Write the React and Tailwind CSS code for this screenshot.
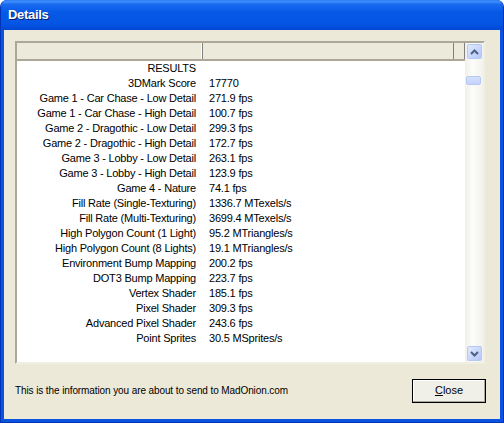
import React from "react";

const ROWS = [
  ["RESULTS", ""],
  ["3DMark Score", "17770"],
  ["Game 1 - Car Chase - Low Detail", "271.9 fps"],
  ["Game 1 - Car Chase - High Detail", "100.7 fps"],
  ["Game 2 - Dragothic - Low Detail", "299.3 fps"],
  ["Game 2 - Dragothic - High Detail", "172.7 fps"],
  ["Game 3 - Lobby - Low Detail", "263.1 fps"],
  ["Game 3 - Lobby - High Detail", "123.9 fps"],
  ["Game 4 - Nature", "74.1 fps"],
  ["Fill Rate (Single-Texturing)", "1336.7 MTexels/s"],
  ["Fill Rate (Multi-Texturing)", "3699.4 MTexels/s"],
  ["High Polygon Count (1 Light)", "95.2 MTriangles/s"],
  ["High Polygon Count (8 Lights)", "19.1 MTriangles/s"],
  ["Environment Bump Mapping", "200.2 fps"],
  ["DOT3 Bump Mapping", "223.7 fps"],
  ["Vertex Shader", "185.1 fps"],
  ["Pixel Shader", "309.3 fps"],
  ["Advanced Pixel Shader", "243.6 fps"],
  ["Point Sprites", "30.5 MSprites/s"],
];

function ScrollButton({ down }) {
  return (
    <div className="w-[15px] h-[15px] mx-auto rounded-[2px] border border-[#b7c8f2] bg-[linear-gradient(135deg,#e1eafe_0%,#c5d5fc_60%,#b4c8f6_100%)] flex items-center justify-center">
      <svg width="9" height="6" viewBox="0 0 9 6">
        <path
          d={down ? "M1 1 L4.5 4.5 L8 1" : "M1 5 L4.5 1.5 L8 5"}
          fill="none"
          stroke="#4d6185"
          strokeWidth="2"
        />
      </svg>
    </div>
  );
}

export default function App() {
  return (
    <div className="w-[504px] h-[423px] bg-white font-['Liberation_Sans',Arial,sans-serif]">
      <div className="w-full h-full flex flex-col rounded-t-[7px] bg-[#0a53e0] border-x border-b border-[#0033b8] overflow-hidden">
        {/* Title bar */}
        <div className="h-[30px] shrink-0 flex items-center pl-[7px] bg-[linear-gradient(to_bottom,#2f7cf5_0%,#3d8ffb_6%,#1b6af0_14%,#0659e6_40%,#0455e3_80%,#0347d3_100%)]">
          <span className="text-white font-bold text-[13px] tracking-[-0.3px] [text-shadow:1px_1px_0_#0a1f6e]">Details</span>
        </div>

        {/* Body */}
        <div className="flex-1 mx-[3px] mb-[3px] bg-[#ece9d8] flex flex-col pt-[11px] pl-[11px] pr-[15px]">
          {/* List box */}
          <div className="h-[323px] border-2 border-t-[#aca899] border-l-[#aca899] border-r-[#f1efe2] border-b-[#f1efe2] bg-white flex text-[11px] tracking-[-0.2px] text-black">
            <div className="flex-1 flex flex-col overflow-hidden">
              {/* Header */}
              <div className="h-[18px] shrink-0 flex bg-[#ebeadb] border-b-2 border-b-[#aca899]">
                <div className="w-[186px] border-r border-r-[#808080] shadow-[inset_-1px_0_0_#ffffff]" />
                <div className="w-[251px] border-r border-r-[#808080]" />
                <div className="flex-1 border-r border-r-[#808080]" />
              </div>
              {/* Rows */}
              <div className="flex flex-col">
                {ROWS.map(([label, value], i) => (
                  <div key={i} className="h-[15px] flex items-center leading-[15px]">
                    <div className="w-[186px] text-right pr-[7px] whitespace-nowrap">{label}</div>
                    <div className="pl-[6px] whitespace-nowrap">{value}</div>
                  </div>
                ))}
              </div>
            </div>
            {/* Scrollbar */}
            <div className="w-[18px] shrink-0 flex flex-col py-[1px] bg-[linear-gradient(to_right,#f0efe8,#fcfcfa_40%,#f3f2ec)]">
              <ScrollButton />
              <div className="flex-1 relative">
                <div className="absolute left-[1px] top-[17px] w-[15px] h-[9px] rounded-[2px] border border-[#b7c8f2] bg-[linear-gradient(to_bottom,#d6e1fd,#c2d2fb)]" />
              </div>
              <ScrollButton down />
            </div>
          </div>

          {/* Footer */}
          <div className="flex-1 flex items-center justify-between pb-[2px] text-black">
            <span className="text-[10px] tracking-[-0.1px]">This is the information you are about to send to MadOnion.com</span>
            <button className="w-[74px] h-[24px] border border-black bg-[#f0efe8] shadow-[inset_-1px_-1px_0_#aca899,inset_1px_1px_0_#ffffff] text-[11px] mr-[-1px]">
              <span className="underline">C</span>lose
            </button>
          </div>
        </div>
      </div>
    </div>
  );
}
